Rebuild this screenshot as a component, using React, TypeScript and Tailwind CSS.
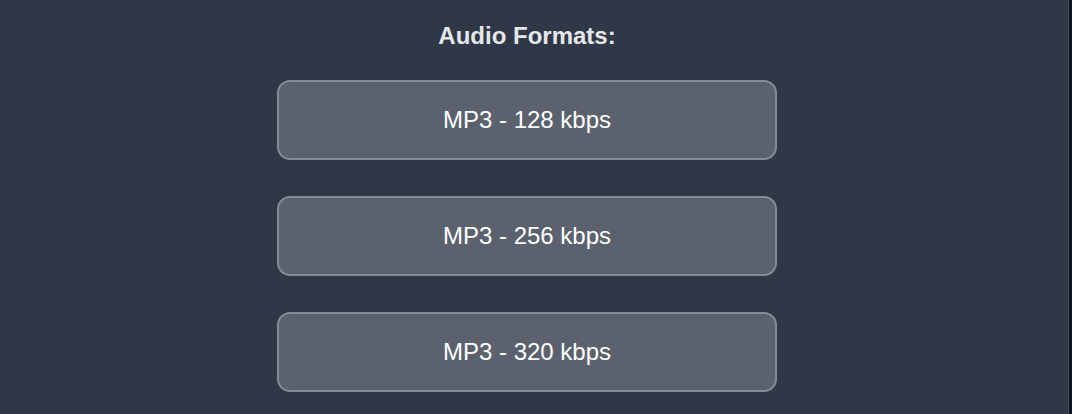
const formats = ["MP3 - 128 kbps", "MP3 - 256 kbps", "MP3 - 320 kbps"];

export default function App() {
  return (
    <div
      className="flex h-[414px] w-full overflow-hidden bg-[#0f1420]"
      style={{ fontFamily: '"Liberation Sans", Arial, sans-serif' }}
    >
      <main className="flex flex-1 flex-col items-center border-r border-[#3f4758] bg-[#303847] pt-[20px] pr-[14px]">
        <h2 className="text-[24px] font-bold leading-[32px] text-[#e5e7eb]">
          Audio Formats:
        </h2>
        <div className="mt-[28px] flex flex-col gap-[36px]">
          {formats.map((f) => (
            <button
              key={f}
              className="grid h-[80px] w-[500px] place-items-center rounded-[13px] border-2 border-[#848b96] bg-[#5b626e] text-[24px] leading-[32px] text-white"
            >
              {f}
            </button>
          ))}
        </div>
      </main>
      <div className="w-[3px]" />
    </div>
  );
}
